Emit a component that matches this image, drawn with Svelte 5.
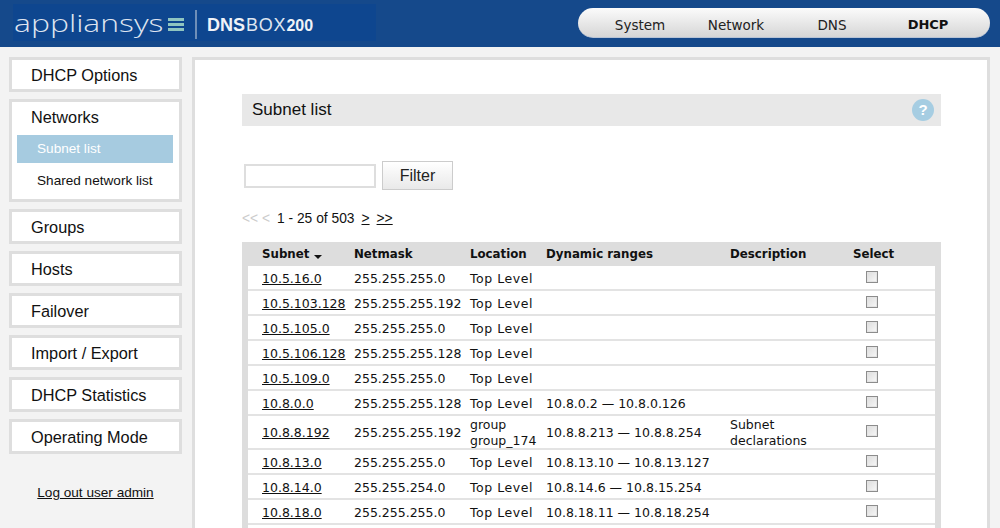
<script>
  const nav = ['System', 'Network', 'DNS', 'DHCP'];
  const sideAfter = ['Groups', 'Hosts', 'Failover', 'Import / Export', 'DHCP Statistics', 'Operating Mode'];

  const rows = [
    ['10.5.16.0', '255.255.255.0', 'Top Level', '', ''],
    ['10.5.103.128', '255.255.255.192', 'Top Level', '', ''],
    ['10.5.105.0', '255.255.255.0', 'Top Level', '', ''],
    ['10.5.106.128', '255.255.255.128', 'Top Level', '', ''],
    ['10.5.109.0', '255.255.255.0', 'Top Level', '', ''],
    ['10.8.0.0', '255.255.255.128', 'Top Level', '10.8.0.2 — 10.8.0.126', ''],
    ['10.8.8.192', '255.255.255.192', 'group group_174', '10.8.8.213 — 10.8.8.254', 'Subnet declarations'],
    ['10.8.13.0', '255.255.255.0', 'Top Level', '10.8.13.10 — 10.8.13.127', ''],
    ['10.8.14.0', '255.255.254.0', 'Top Level', '10.8.14.6 — 10.8.15.254', ''],
    ['10.8.18.0', '255.255.255.0', 'Top Level', '10.8.18.11 — 10.8.18.254', ''],
    ['', '', '', '', '']
  ];
</script>

<div class="page">
  <header class="topbar">
    <div class="brand">
      <span class="logo"><span class="logo-text">appliansys</span></span>
      <svg class="logo-mark" width="16" height="13" viewBox="0 0 16 13">
        <rect y="0" width="16" height="3" fill="#8fc5c0" />
        <rect y="5" width="16" height="3" fill="#8fc5c0" />
        <rect y="10" width="16" height="3" fill="#8fc5c0" />
      </svg>
      <span class="divider"></span>
      <span class="product"><b>DNS</b><span class="box">BOX</span><b class="num">200</b></span>
    </div>
    <nav class="mainnav">
      {#each nav as item}
        <span class="navitem" class:current={item === 'DHCP'}>{item}</span>
      {/each}
    </nav>
  </header>

  <div class="content">
    <aside class="sidebar">
      <div class="sidebox">DHCP Options</div>
      <div class="sidebox networks">
        <div class="boxtitle">Networks</div>
        <div class="subitem active">Subnet list</div>
        <div class="subitem">Shared network list</div>
      </div>
      {#each sideAfter as item}
        <div class="sidebox">{item}</div>
      {/each}
      <a class="logout" href="#logout">Log out user admin</a>
    </aside>

    <main class="panel">
      <div class="titlebar">
        <h1>Subnet list</h1>
        <span class="help">?</span>
      </div>

      <div class="filter">
        <input type="text" />
        <button>Filter</button>
      </div>

      <div class="pager">
        <span class="off">&lt;&lt; &lt;</span>
        <span>1 - 25 of 503</span>
        <a href="#next">&gt;</a>
        <a href="#last">&gt;&gt;</a>
      </div>

      <div class="tablewrap">
        <table>
          <thead>
            <tr>
              <th class="c1">Subnet <i class="caret"></i></th>
              <th class="c2">Netmask</th>
              <th class="c3">Location</th>
              <th class="c4">Dynamic ranges</th>
              <th class="c5">Description</th>
              <th class="c6">Select</th>
            </tr>
          </thead>
          <tbody>
            {#each rows as row}
              <tr class:tall={row[4] !== ''}>
                <td class="c1"><a href="#subnet">{row[0]}</a></td>
                <td class="c2">{row[1]}</td>
                <td class="c3" class:toplevel={row[2] === 'Top Level'}>{row[2]}</td>
                <td class="c4">{row[3]}</td>
                <td class="c5">{row[4]}</td>
                <td class="c6"><span class="check"></span></td>
              </tr>
            {/each}
          </tbody>
        </table>
      </div>
    </main>
  </div>
</div>

<style>
  :global(html), :global(body) {
    margin: 0;
    overflow: hidden;
  }

  .page {
    height: 528px;
    overflow: hidden;
    background: #f3f3f3;
    font-family: "Liberation Sans", Arial, sans-serif;
    color: #111;
  }

  .topbar {
    height: 47px;
    background: #15498b;
    display: flex;
    justify-content: space-between;
    box-sizing: border-box;
    padding: 4px 10px 0 13px;
  }

  .brand {
    width: 363px;
    height: 37px;
    background: #0e468f;
    display: flex;
    align-items: center;
    box-sizing: border-box;
    padding-left: 1px;
  }

  .logo {
    width: 151px;
    height: 37px;
    flex: none;
    overflow: visible;
  }

  .logo-text {
    display: inline-block;
    font-family: "Open Sans", sans-serif;
    font-weight: 300;
    font-size: 24px;
    line-height: 37px;
    color: #dfe4f0;
    transform: scaleX(1.33);
    transform-origin: left center;
  }

  .logo-mark {
    margin-left: 3px;
    margin-top: 4px;
    flex: none;
  }

  .divider {
    width: 2px;
    height: 29px;
    background: #6f8fb8;
    margin: 3px 10px 0 11px;
    flex: none;
  }

  .product {
    font-size: 18px;
    color: #dfe6f1;
    margin-top: 5px;
    white-space: nowrap;
  }

  .product b {
    font-weight: 700;
    color: #f0f3f8;
  }

  .product .box {
    letter-spacing: 0.8px;
    margin-left: 1px;
  }

  .product .num {
    font-size: 16px;
  }

  .mainnav {
    margin-top: 4px;
    width: 412px;
    height: 30px;
    box-sizing: border-box;
    border-radius: 15px;
    background: linear-gradient(#fbfbfb, #d6d6d6);
    border-bottom: 1px solid #b8c4d6;
    display: grid;
    grid-template-columns: repeat(4, 96px);
    justify-items: center;
    align-items: center;
    padding: 4px 0 0 14px;
    font-family: "DejaVu Sans", Verdana, sans-serif;
    font-size: 13.5px;
    color: #222;
  }

  .navitem.current {
    font-weight: 700;
    font-size: 13px;
    color: #111;
  }

  .content {
    display: flex;
    padding: 10px 10px 0 9px;
    gap: 10px;
  }

  .sidebar {
    width: 173px;
    flex: none;
    display: flex;
    flex-direction: column;
    gap: 7px;
  }

  .sidebox {
    background: #fff;
    border: 3px solid #dedede;
    height: 35px;
    box-sizing: border-box;
    padding-left: 19px;
    font-size: 16.3px;
    line-height: 31px;
  }

  .sidebox.networks {
    height: 103px;
    padding: 0 6px 0 5px;
  }

  .boxtitle {
    padding-left: 14px;
    line-height: 31px;
    margin-bottom: 2px;
  }

  .subitem {
    height: 28px;
    line-height: 28px;
    padding-left: 20px;
    font-size: 13.6px;
    margin-bottom: 4px;
  }

  .subitem.active {
    background: #a6cbe0;
    color: #fff;
  }

  .logout {
    margin-top: 24px;
    text-align: center;
    font-size: 13.6px;
    color: #111;
  }

  .panel {
    flex: 1;
    background: #fff;
    border: 3px solid #dedede;
    border-bottom: none;
    box-sizing: border-box;
    height: 480px;
    padding: 34px 46px 0 47px;
  }

  .titlebar {
    height: 32px;
    background: #e8e8e8;
    display: flex;
    align-items: center;
    justify-content: space-between;
    padding: 0 7px 0 10px;
  }

  h1 {
    margin: 0;
    font-size: 17px;
    font-weight: 400;
  }

  .help {
    width: 22px;
    height: 22px;
    border-radius: 50%;
    background: #a6cde2;
    color: #fff;
    font-weight: 700;
    font-size: 15px;
    text-align: center;
    line-height: 22px;
  }

  .filter {
    display: flex;
    align-items: center;
    gap: 6px;
    margin: 35px 0 0 2px;
  }

  .filter input {
    width: 132px;
    height: 24px;
    box-sizing: border-box;
    border: 2px solid #dedede;
    padding: 0;
    background: #fff;
  }

  .filter button {
    width: 71px;
    height: 29px;
    border: 1px solid #ccc;
    background: linear-gradient(#fff, #e9e9e9);
    font-family: inherit;
    font-size: 16px;
    color: #222;
    padding: 0;
  }

  .pager {
    margin-top: 21px;
    font-size: 13.8px;
    height: 16px;
    line-height: 16px;
    display: flex;
    gap: 7px;
  }

  .pager .off {
    color: #ccc;
  }

  .pager a {
    color: #111;
  }

  .tablewrap {
    margin-top: 15px;
    background: #ddd;
    padding: 0 6px;
  }

  table {
    width: 100%;
    border-collapse: collapse;
    table-layout: fixed;
    font-family: "DejaVu Sans", Verdana, sans-serif;
    font-size: 12.5px;
    color: #111;
    background: #fff;
  }

  th {
    background: #ddd;
    height: 24px;
    padding: 0;
    text-align: left;
    font-weight: 700;
    font-size: 11.8px;
  }

  td {
    height: 21px;
    padding: 2px 0 0;
    border-bottom: 2px solid #e3e3e3;
    line-height: 15px;
  }

  tr.tall td {
    padding-top: 1px;
    line-height: 15.5px;
  }

  td a {
    color: #111;
  }

  td.toplevel {
    letter-spacing: 0.55px;
  }

  .c1 { width: 92px; }
  .c2 { width: 116px; }
  .c3 { width: 76px; }
  .c4 { width: 184px; }
  .c5 { width: 123px; }

  th.c1, td.c1 { padding-left: 14px; }

  .caret {
    display: inline-block;
    border-left: 4px solid transparent;
    border-right: 4px solid transparent;
    border-top: 4px solid #111;
    vertical-align: -1px;
  }

  .check {
    display: block;
    width: 12px;
    height: 12px;
    box-sizing: border-box;
    margin: 0 0 3px 13px;
    border: 1px solid #8c8c8c;
    box-shadow: inset 0 0 0 1px #e4e4e4;
    background: linear-gradient(135deg, #dcdcdc, #f8f8f8);
  }
</style>
